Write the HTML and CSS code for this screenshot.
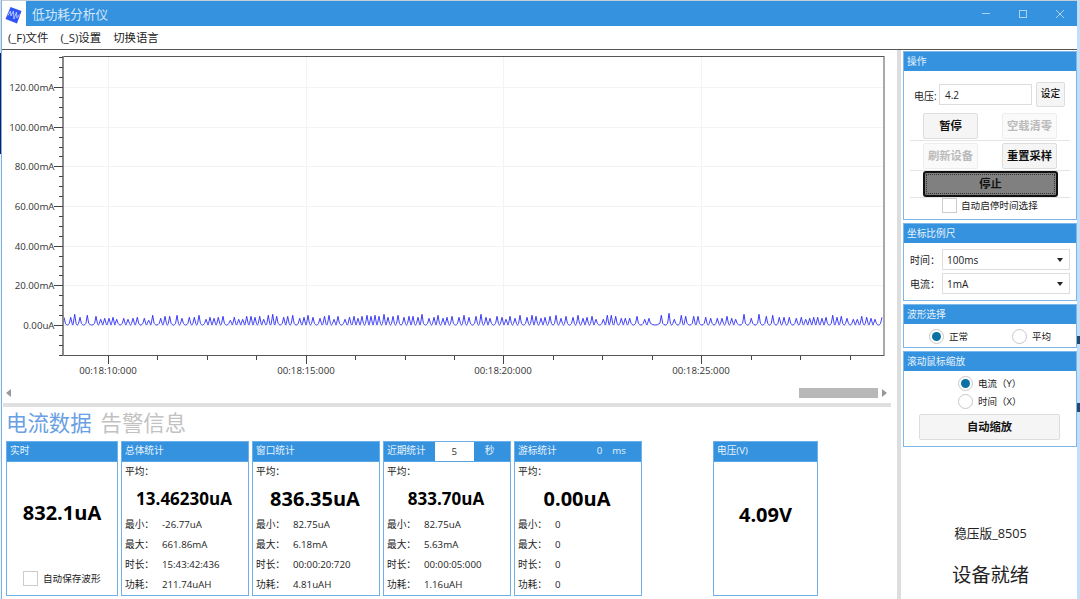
FILE: index.html
```html
<!DOCTYPE html>
<html lang="zh-CN">
<head>
  <meta charset="utf-8" />
  <title>低功耗分析仪</title>
  <link rel="stylesheet" href="styles.css">
</head>
<body>
  <div class="edge-left"></div>
  <div class="window">
    <div class="titlebar">
      <div class="logo">
        <svg width="23" height="25" viewBox="0 0 23 25">
          <path d="M7.500 6L18.500 10L14 22.500L2.500 18Z" fill="#2f55f5" />
          <path d="M5 14.500L7.500 10L8 15L10.500 10L11 18L13.500 11L14 17L16.500 13.500" fill="none" stroke="#b4c4ff" stroke-width="1" />
        </svg>
      </div>
      <div class="title">低功耗分析仪</div>
      <svg class="controls" width="110" height="25" viewBox="0 0 110 25" fill="none" stroke="#a9d2f6">
        <path d="M14 12.500H22" />
        <rect x="51.500" y="9.500" width="7" height="7" />
        <path d="M88 9L96 17M96 9L88 17" />
      </svg>
    </div>
    <div class="menu">
      <span>(_F)文件</span>
      <span>(_S)设置</span>
      <span>切换语言</span>
    </div>

    <div class="main">
      <div class="left">
        <svg class="chart" width="888" height="334" viewBox="3 50 888 334">
          <g id="grid" stroke="#f3f3f3"></g>
          <path id="wave" fill="none" stroke="#2a2af5" stroke-width="0.9" />
          <rect x="63" y="56.500" width="821" height="299" fill="none" stroke="#555" />
          <path d="M63 56V356" stroke="#8a8a8a" stroke-width="2" />
          <g id="ticks" stroke="#444"></g>
          <g id="labels"></g>
        </svg>
        <div class="scrollbar">
          <div class="arrow arrow-left"></div>
          <div class="thumb"></div>
          <div class="arrow arrow-right"></div>
        </div>
        <div class="splitter-h"></div>
        <div class="tabs">
          <span class="tab active">电流数据</span>
          <span class="tab">告警信息</span>
        </div>
        <div class="cards">
          <div class="card realtime">
            <div class="head">实时</div>
            <div class="big">832.1uA</div>
            <div class="check"><i class="box"></i>自动保存波形</div>
          </div>
          <div class="card stat">
            <div class="head">总体统计</div>
            <div class="avg">平均：</div>
            <div class="value small">13.46230uA</div>
            <div class="row"><span>最小：</span>-26.77uA</div>
            <div class="row"><span>最大：</span>661.86mA</div>
            <div class="row"><span>时长：</span>15:43:42:436</div>
            <div class="row"><span>功耗：</span>211.74uAH</div>
          </div>
          <div class="card stat">
            <div class="head">窗口统计</div>
            <div class="avg">平均：</div>
            <div class="value">836.35uA</div>
            <div class="row"><span>最小：</span>82.75uA</div>
            <div class="row"><span>最大：</span>6.18mA</div>
            <div class="row"><span>时长：</span>00:00:20:720</div>
            <div class="row"><span>功耗：</span>4.81uAH</div>
          </div>
          <div class="card stat">
            <div class="head">近期统计<span class="seconds">5</span>秒</div>
            <div class="avg">平均：</div>
            <div class="value small">833.70uA</div>
            <div class="row"><span>最小：</span>82.75uA</div>
            <div class="row"><span>最大：</span>5.63mA</div>
            <div class="row"><span>时长：</span>00:00:05:000</div>
            <div class="row"><span>功耗：</span>1.16uAH</div>
          </div>
          <div class="card stat">
            <div class="head">游标统计<span class="cursor-num">0</span>ms</div>
            <div class="avg">平均：</div>
            <div class="value">0.00uA</div>
            <div class="row"><span>最小：</span>0</div>
            <div class="row"><span>最大：</span>0</div>
            <div class="row"><span>时长：</span>0</div>
            <div class="row"><span>功耗：</span>0</div>
          </div>
          <div class="card voltage">
            <div class="head">电压(V)</div>
            <div class="big">4.09V</div>
          </div>
        </div>
      </div>

      <div class="splitter-v"></div>

      <div class="side">
        <div class="panel operate">
          <div class="head">操作</div>
          <div class="volt-row">
            <label>电压:</label>
            <div class="input">4.2</div>
            <div class="button set">设定</div>
          </div>
          <div class="btn-row first">
            <div class="button">暂停</div>
            <div class="button disabled">空载清零</div>
          </div>
          <div class="btn-row">
            <div class="button disabled">刷新设备</div>
            <div class="button">重置采样</div>
          </div>
          <div class="btn-row last">
            <div class="button stop">停止</div>
          </div>
          <div class="check"><i class="box"></i>自动启停时间选择</div>
        </div>

        <div class="panel scale">
          <div class="head">坐标比例尺</div>
          <div class="field"><label>时间：</label><div class="select">100ms</div></div>
          <div class="field"><label>电流：</label><div class="select">1mA</div></div>
        </div>

        <div class="panel wave">
          <div class="head">波形选择</div>
          <div class="radios">
            <div class="radio"><i class="dot on"></i>正常</div>
            <div class="radio"><i class="dot"></i>平均</div>
          </div>
        </div>

        <div class="panel zoom">
          <div class="head">滚动鼠标缩放</div>
          <div class="radio"><i class="dot on"></i>电流（Y）</div>
          <div class="radio"><i class="dot"></i>时间（X）</div>
          <div class="button auto">自动缩放</div>
        </div>

        <div class="version">稳压版_8505</div>
        <div class="status">设备就绪</div>
      </div>
    </div>
  </div>
  <div class="edge-right"></div>
  <script src="script.js"></script>
</body>
</html>
```
FILE: styles.css
```css
* {
  box-sizing: border-box;
}
body {
  margin: 0;
  width: 1080px;
  height: 599px;
  overflow: hidden;
  display: flex;
  background: #fff;
  color: #222;
  font-family: "Open Sans", "Noto Sans CJK SC", sans-serif;
  font-size: 10px;
  line-height: 1;
  white-space: nowrap;
}
.edge-left {
  width: 1px;
  background: linear-gradient(#ddd 53px, #1c1c5a 53px, #1c1c5a 154px, #f3f3f3 154px);
}
.edge-right {
  width: 3px;
  background: linear-gradient(#c0dff8 336px, #224a70 336px, #224a70 344px, #c0dff8 344px, #c0dff8 403px, #224a70 403px, #224a70 412px, #c0dff8 412px);
}
.window {
  width: 1076px;
  border-left: 1px solid #74b3ec;
  border-top: 1px solid #c3cdd5;
}
.titlebar {
  height: 25px;
  display: flex;
  background: #3492df;
}
.logo {
  width: 24px;
  padding-left: 1px;
  background: #fff;
}
.logo svg {
  display: block;
}
.title {
  padding: 7px 0 0 6px;
  flex: 1;
  color: #d3e8fa;
  font-size: 12.7px;
}
.controls {
  margin-right: -1px;
}
.menu {
  height: 24px;
  display: flex;
  gap: 12px;
  padding: 6px 0 0 6px;
  font-size: 11.4px;
  border-bottom: 1px solid #555;
}
.main {
  display: flex;
  height: 549px;
  padding-left: 1px;
}
.left {
  width: 888px;
  flex: none;
}
.chart {
  display: block;
}
.chart text {
  font-size: 9.7px;
  fill: #333;
}
.scrollbar {
  height: 19px;
  padding: 0 4px 1px 3px;
  display: flex;
  align-items: center;
  justify-content: space-between;
}
.thumb {
  width: 79px;
  height: 10px;
  margin-left: auto;
  margin-right: 4px;
  background: #b8b8b8;
}
.arrow {
  border-top: 4.5px solid transparent;
  border-bottom: 4.5px solid transparent;
}
.arrow-left {
  border-right: 5px solid #999;
}
.arrow-right {
  border-left: 5px solid #999;
}
.splitter-h {
  height: 4px;
  background: #e0e0e0;
}
.tabs {
  height: 34px;
  padding: 5px 0 0 3px;
  display: flex;
  gap: 9px;
  font-size: 21.4px;
  font-weight: 400;
}
.tab {
  color: #c2c2c2;
}
.tab.active {
  color: #69a0e4;
}
.cards {
  display: flex;
  gap: 3px;
  padding-left: 3px;
}
.card {
  width: 128px;
  height: 155px;
  border: 1px solid #6db0ea;
}
.realtime {
  width: 112px;
}
.voltage {
  width: 105px;
  margin-left: 68px;
}
.head {
  display: flex;
  align-items: center;
  height: 19px;
  padding-left: 3px;
  background: #3492df;
  color: #e8f3fc;
  font-size: 9.7px;
}
.card .head {
  height: 20px;
  padding-bottom: 1px;
  border-bottom: 1px solid #58a5e6;
}
.seconds {
  width: 39px;
  height: 19px;
  margin: 1px 11px 0 9px;
  background: #fff;
  color: #333;
  text-align: center;
  line-height: 19px;
}
.cursor-num {
  margin: 0 10px 0 40px;
}
.big {
  padding-top: 41px;
  height: 116px;
  color: #000;
  font-size: 20px;
  font-weight: bold;
  text-align: center;
}
.voltage .big {
  padding-top: 43px;
}
.check {
  display: flex;
  align-items: center;
  gap: 5px;
  font-size: 9.6px;
}
.realtime .check {
  margin-top: -7px;
  padding-left: 16px;
}
.box {
  width: 15px;
  height: 15px;
  border: 1px solid #ccc;
}
.avg {
  padding: 5px 0 0 3px;
  height: 21px;
  font-size: 9.7px;
}
.value {
  height: 32px;
  padding-right: 2px;
  line-height: 31px;
  color: #000;
  font-size: 20px;
  font-weight: bold;
  text-align: center;
}
.value.small {
  font-size: 17px;
}
.row {
  display: flex;
  height: 20px;
  align-items: center;
  padding-left: 3px;
  font-size: 9.7px;
}
.row span {
  width: 37px;
}
.splitter-v {
  width: 4px;
  margin-left: 6px;
  flex: none;
  background: #ddd;
}
.side {
  width: 175px;
  margin-left: 2px;
  padding-top: 1px;
  flex: none;
}
.panel {
  width: 174px;
  border: 1px solid #7db8ec;
  margin-bottom: 3px;
}
.operate {
  height: 169px;
}
.volt-row {
  display: flex;
  align-items: center;
  height: 26px;
  margin-top: 10px;
  padding-left: 10px;
}
.volt-row label {
  width: 25px;
  padding-top: 4px;
}
.input {
  width: 93px;
  height: 21px;
  padding: 5px 5px;
  border: 1px solid #ddd;
}
.button {
  display: flex;
  align-items: center;
  justify-content: center;
  width: 55px;
  height: 26px;
  border: 1px solid #ddd;
  border-radius: 2px;
  background: #f5f5f5;
  color: #111;
  font-size: 11.3px;
  font-weight: bold;
}
.button.disabled {
  border-color: #ededed;
  background: #fafafa;
  color: #bbb;
}
.set {
  width: 29px;
  height: 25px;
  margin-left: 4px;
  font-size: 9.7px;
  font-weight: 500;
}
.btn-row {
  display: flex;
  justify-content: space-between;
  height: 30px;
  margin: 0 6px;
  padding: 2px 13px 0;
  border-bottom: 1px solid #e4e4e4;
}
.btn-row.first {
  margin-top: 4px;
}
.btn-row.last {
  height: 27px;
  padding: 0 12px 0 13px;
}
.stop {
  width: 137px;
  border: 2px solid #111;
  border-radius: 3px;
  background: #808080;
  outline: 1px dotted #333;
  outline-offset: -4px;
}
.operate .check {
  padding-left: 38px;
  gap: 4px;
}
.scale {
  height: 78px;
}
.field {
  display: flex;
  align-items: center;
  height: 21px;
  margin: 6px 6px -2px;
}
.field + .field {
  margin-top: 5px;
}
.field label {
  width: 32px;
}
.select {
  display: flex;
  justify-content: space-between;
  align-items: center;
  width: 128px;
  height: 21px;
  padding: 0 6px 0 4px;
  border: 1px solid #ddd;
}
.select::after {
  content: "";
  border: 3px solid transparent;
  border-top: 4px solid #222;
  border-bottom: 0;
}
.wave {
  height: 44px;
}
.radios {
  display: flex;
  padding: 5px 25px 0;
  justify-content: space-between;
}
.radio {
  display: flex;
  align-items: center;
  gap: 5px;
  font-size: 9.5px;
}
.dot {
  display: flex;
  width: 15px;
  height: 15px;
  border: 1px solid #c8c8c8;
  border-radius: 50%;
}
.dot.on::after {
  content: "";
  width: 9px;
  height: 9px;
  margin: 2px;
  border-radius: 50%;
  background: #0b71a3;
}
.zoom {
  height: 96px;
}
.zoom .radio {
  margin: 5px 0 -2px 54px;
}
.auto {
  width: 141px;
  margin: 7px 0 0 15px;
}
.version {
  margin-top: 80px;
  font-size: 12.7px;
  text-align: center;
}
.status {
  margin-top: 25px;
  font-size: 19.3px;
  text-align: center;
}
```
FILE: script.js
```javascript
const ns = "http://www.w3.org/2000/svg";

function add(parent, tag, attrs, text) {
  const el = document.createElementNS(ns, tag);
  for (const name in attrs) el.setAttribute(name, attrs[name]);
  if (text) el.textContent = text;
  document.getElementById(parent).appendChild(el);
}

// y axis
const amps = ["120.00mA", "100.00mA", "80.00mA", "60.00mA", "40.00mA", "20.00mA", "0.00uA"];
for (let i = -3; i <= 27; i++) {
  const y = Math.round(87 + i * 9.917) + 0.5;
  const major = i >= 0 && i % 4 === 0;
  add("ticks", "path", { d: `M${major ? 54 : 59} ${y}H63` });
  if (major) {
    add("grid", "path", { d: `M64 ${y}H884` });
    add("labels", "text", { x: 54.5, y: y + 3, "text-anchor": "end" }, amps[i / 4]);
  }
}

// x axis
const times = ["00:18:10:000", "00:18:15:000", "00:18:20:000", "00:18:25:000"];
for (let i = 0; i <= 15; i++) {
  const x = Math.floor(108.3 + i * 49.45) + 0.5;
  const major = i % 4 === 0;
  add("ticks", "path", { d: `M${x} 356V${major ? 364 : 360}` });
  if (major) {
    add("grid", "path", { d: `M${x} 57V355` });
    add("labels", "text", { x: x - 0.5, y: 374, "text-anchor": "middle" }, times[i / 4]);
  }
}

// peaks of the current curve: x, height
const peaks = [
  64, 8, 70.7, 8, 74.7, 11, 80, 8, 87.3, 10, 96, 9, 100.7, 6, 104.7, 7, 109, 7, 113, 8, 116.7, 6,
  123.7, 7, 128, 6, 133, 7, 137.3, 8, 144.3, 7, 148.7, 5, 152.7, 10, 160.7, 7, 165, 9, 169.7, 9,
  177, 10, 182, 7, 189.3, 8, 194.3, 8, 199, 10, 206, 6, 210, 8, 214, 7, 218.3, 8, 223, 9, 230.3, 5,
  234.3, 8, 238.7, 6, 242.7, 6, 246.7, 9, 251, 9, 255, 8, 259.7, 9, 263.7, 6, 268.3, 10, 272.7, 11,
  276.7, 9, 283.7, 8, 287.7, 9, 292.7, 10, 299.7, 7, 304, 8, 308, 10, 313, 8, 320, 7, 324.5, 9,
  329, 10, 334, 6, 338, 9, 345, 6, 349.5, 8, 354, 9, 358, 7, 362, 9, 367, 10, 371, 9, 375, 10,
  379, 9, 384, 11, 388, 8, 393, 9, 398, 10, 404, 8, 409, 9, 413, 9, 418, 8, 422, 11, 429, 7,
  434, 8, 438, 10, 443, 7, 447, 8, 452, 9, 459, 8, 464, 10, 469, 8, 476, 9, 481, 11, 486, 8,
  490, 7, 497, 9, 502, 8, 506, 6, 510, 9, 515, 7, 520, 10, 527, 8, 532, 10, 536, 9, 541, 7,
  545, 8, 550, 9, 556, 10, 561, 7, 566, 9, 573, 8, 578, 10, 583, 7, 587, 8, 592, 9, 596, 6,
  603.3, 6, 607.3, 10, 611.3, 10, 615.7, 9, 621.3, 7, 625.3, 7, 629.7, 7, 637, 9, 644.7, 6, 649, 7,
  661.3, 10, 669, 12, 674.3, 6, 681.3, 10, 685.7, 9, 693.7, 9, 698, 9, 705.7, 8, 710.7, 7,
  717.3, 7, 722, 7, 727, 9, 731.7, 7, 735.7, 6, 744, 11, 751.3, 7, 759, 11, 766.3, 9, 772.7, 10,
  779.3, 8, 784, 8, 789.3, 8, 796.3, 7, 801.3, 8, 805.7, 6, 809.7, 7, 813.7, 8, 817.7, 8, 822, 7,
  826, 8, 832.7, 10, 837, 8, 841.3, 9, 847, 7, 853.3, 6, 857.3, 6, 861.7, 9, 866.7, 8, 871, 7,
  875, 6, 882, 8
];
const base = 325.3;
let d = `M64 ${base - peaks[1]}`;
for (let i = 2; i < peaks.length; i += 2) {
  const from = peaks[i - 2];
  const to = peaks[i];
  d += `L${from + 1.4} ${base - 2}Q${(from + to) / 2} ${base + 1.5} ${to - 1.4} ${base - 2}L${to} ${base - peaks[i + 1]}`;
}
document.getElementById("wave").setAttribute("d", d);
```
